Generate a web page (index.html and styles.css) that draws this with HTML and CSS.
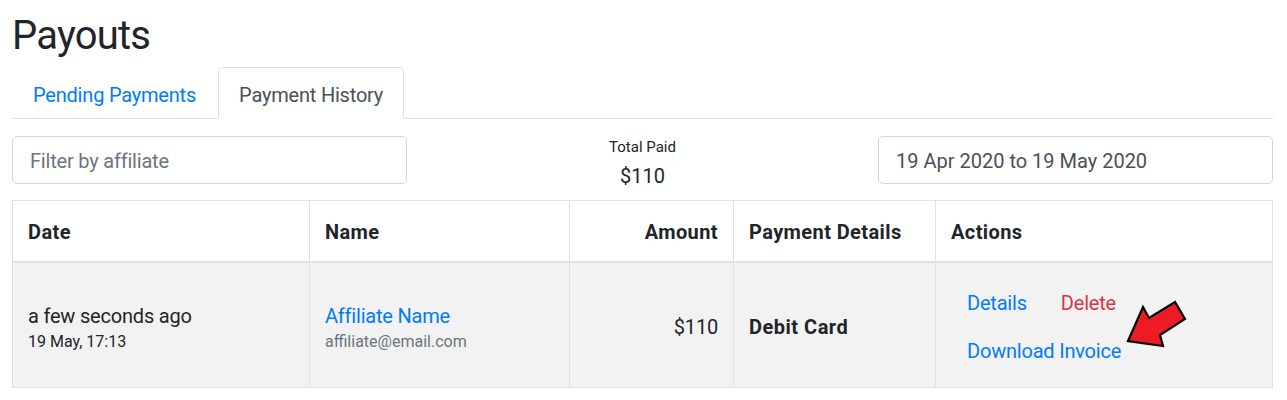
FILE: index.html
```html
<!DOCTYPE html>
<html lang="en">
<head>
<meta charset="utf-8">
<title>Payouts</title>
<link rel="stylesheet" href="styles.css">
</head>
<body>
<div class="page">
  <h2 class="title">Payouts</h2>
  <ul class="tabs">
    <li><a class="tab-link" href="#">Pending Payments</a></li>
    <li><a class="tab-link active" href="#">Payment History</a></li>
  </ul>
  <div class="filters">
    <input class="field" type="text" placeholder="Filter by affiliate">
    <div class="total">
      <div class="total-label">Total Paid</div>
      <div class="total-value">$110</div>
    </div>
    <input class="field date" type="text" value="19 Apr 2020 to 19 May 2020">
  </div>
  <table class="table">
    <colgroup>
      <col class="c-date"><col class="c-name"><col class="c-amount"><col class="c-details"><col class="c-actions">
    </colgroup>
    <thead>
      <tr>
        <th>Date</th>
        <th>Name</th>
        <th class="right">Amount</th>
        <th>Payment Details</th>
        <th>Actions</th>
      </tr>
    </thead>
    <tbody>
      <tr>
        <td>
          <div class="main">a few seconds ago</div>
          <div class="sub">19 May, 17:13</div>
        </td>
        <td>
          <a class="main link" href="#">Affiliate Name</a>
          <div class="sub muted">affiliate@email.com</div>
        </td>
        <td class="right">$110</td>
        <td class="bold">Debit Card</td>
        <td>
          <div class="actions">
            <div class="action-row">
              <a class="btn-link" href="#">Details</a>
              <a class="btn-link danger" href="#">Delete</a>
            </div>
            <div class="action-row">
              <a class="btn-link" href="#">Download Invoice</a>
            </div>
            <svg class="arrow" width="64" height="50" viewBox="0 0 64 50" aria-hidden="true">
              <polygon points="2,41 17,7 23,18 49,2 59,19 34,35 37,46" fill="#ed1c24" stroke="#000" stroke-width="2.2" stroke-linejoin="miter"/>
            </svg>
          </div>
        </td>
      </tr>
    </tbody>
  </table>
</div>
</body>
</html>
```

FILE: styles.css
```css
* { box-sizing: border-box; }

body {
  margin: 0;
  background: #fff;
  color: #212529;
  font-family: Roboto, "Open Sans", "Liberation Sans", sans-serif;
  font-size: 20px;
  line-height: 1.5;
  letter-spacing: -0.2px;
}

.page {
  padding: 12px 14px 0 12px;
}

.title {
  margin: 0 0 7px;
  font-size: 40px;
  font-weight: 400;
  line-height: 1.2;
  letter-spacing: -0.8px;
}

.tabs {
  display: flex;
  list-style: none;
  margin: 0;
  padding: 0;
  border-bottom: 1px solid #dee2e6;
}

.tab-link {
  display: block;
  margin-bottom: -1px;
  margin-right: 1px;
  padding: 12px 20px 8px;
  border: 1px solid transparent;
  border-radius: 5px 5px 0 0;
  color: #007bff;
  text-decoration: none;
  line-height: 30px;
}

.tab-link.active {
  color: #495057;
  background: #fff;
  border-color: #dee2e6 #dee2e6 #fff;
}

.filters {
  display: grid;
  grid-template-columns: 395px 1fr 395px;
  grid-template-rows: 48px;
  align-items: start;
  margin-top: 17px;
}

.field {
  height: 48px;
  padding: 8px 17px 6px;
  border: 1px solid #ced4da;
  border-radius: 5px;
  font: inherit;
  letter-spacing: inherit;
  color: #495057;
  background: #fff;
}

.field.date { letter-spacing: 0; }

.field::placeholder { color: #6c757d; }

.total {
  text-align: center;
  padding-top: 1px;
}

.total-label {
  font-size: 15px;
  line-height: 20px;
  letter-spacing: 0;
}

.total-value {
  margin-top: 8px;
  font-size: 20px;
  line-height: 22px;
  letter-spacing: 0;
}

.table {
  width: 100%;
  margin-top: 16px;
  border-collapse: collapse;
  table-layout: fixed;
}

.c-date { width: 297px; }
.c-name { width: 260px; }
.c-amount { width: 164px; }
.c-details { width: 202px; }

.table th,
.table td {
  border: 1px solid #dee2e6;
  padding: 15px;
  text-align: left;
}

.table th {
  vertical-align: bottom;
  border-bottom-width: 2px;
  padding-top: 16px;
  padding-bottom: 14px;
  font-weight: 700;
  line-height: 30px;
  letter-spacing: 0.4px;
}

.table td {
  vertical-align: middle;
  padding-top: 17px;
  padding-bottom: 13px;
  background: #f2f2f2;
}

.table .right { text-align: right; }

.bold {
  font-weight: 700;
  letter-spacing: 0.5px;
}

.main {
  display: block;
  line-height: 30px;
}

.sub {
  font-size: 16px;
  line-height: 22px;
  letter-spacing: 0;
}

.muted { color: #6c757d; }

.link {
  color: #007bff;
  text-decoration: none;
}

.actions {
  position: relative;
  margin: -1px 0;
}

.action-row {
  display: flex;
  gap: 2px;
}

.btn-link {
  display: block;
  padding: 8px 15px;
  border: 1px solid transparent;
  color: #007bff;
  text-decoration: none;
  line-height: 30px;
}

.btn-link.danger { color: #dc3545; }

.arrow {
  position: absolute;
  left: 175px;
  top: 21px;
}
```
